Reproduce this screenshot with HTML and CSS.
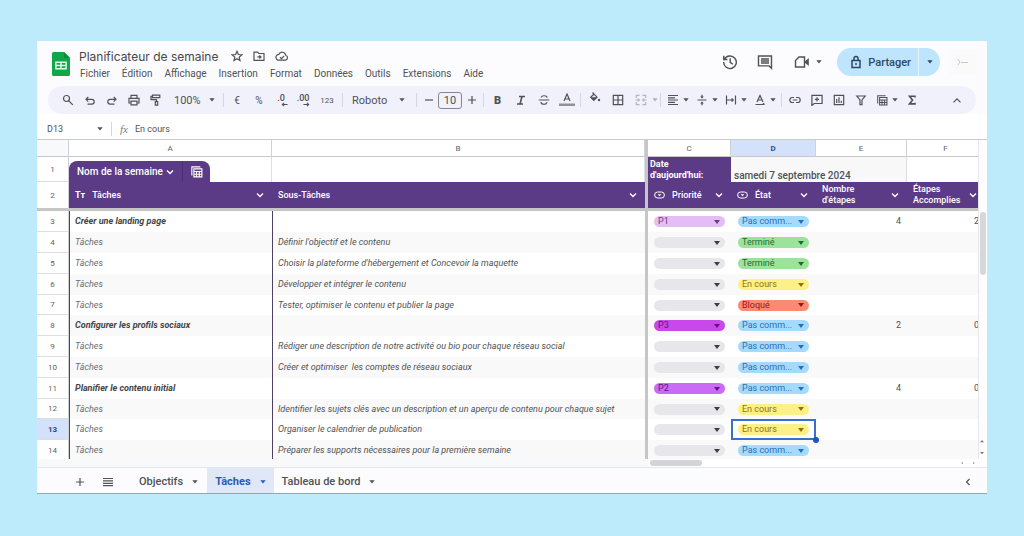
FILE: index.html
```html
<!DOCTYPE html>
<html lang="fr">
<head>
<meta charset="utf-8">
<meta name="viewport" content="width=device-width, initial-scale=1">
<title>Planificateur de semaine</title>
<link rel="stylesheet" href="styles.css">
</head>
<body>
<svg class="defs" aria-hidden="true">
  <symbol id="chev" viewBox="0 0 8 8"><path d="M1 2.5l3 3 3-3"/></symbol>
  <symbol id="caret" viewBox="0 0 6 4"><path class="solid" d="M0.300 0.300h5.400L3 3.500z"/></symbol>
  <symbol id="sheet" viewBox="0 0 14 14"><path d="M2 11.2V2h9.2M4.2 4.2h8.6v8.6H4.2zM4.200 7h8.600M4.200 10h8.600M7 7v6M10 7v6"/></symbol>
  <symbol id="pill" viewBox="0 0 11 8"><rect x="0.6" y="1" width="9.8" height="6" rx="3"/><path class="solid" d="M3.6 3.2h3.8L5.5 5.2z"/></symbol>
</svg>
<main class="app">
  <header class="head">
    <svg class="logo" viewBox="0 0 18 24" aria-label="Sheets"><path fill="#10a64a" d="M1.500 0H12l6 6v16.500a1.500 1.500 0 0 1-1.500 1.500h-15A1.500 1.500 0 0 1 0 22.500v-21A1.500 1.500 0 0 1 1.500 0z"/><path fill="#0b8a3b" d="M12 0l6 6h-6z"/><path fill="none" stroke="#e9fbef" stroke-width="1.400" d="M3.900 10.200h10.200v6.600H3.900zM3.900 13.500h10.200M9 10.200v6.600"/></svg>
    <div class="doc">
      <div class="title-row">
        <h1>Planificateur de semaine</h1>
        <button class="mini" aria-label="Favori"><svg viewBox="0 0 12 12"><path d="M6 1.300l1.400 3.200 3.500.3-2.700 2.300.8 3.400-3-1.800-3 1.800.8-3.400L1.100 4.800l3.500-.3z"/></svg></button>
        <button class="mini" aria-label="Déplacer"><svg viewBox="0 0 12 12"><path d="M1 2.200h3.600l1.200 1.300H11v6.800H1zM4.300 6.900h3.600M6.400 5.300L8 6.900 6.400 8.500"/></svg></button>
        <button class="mini cloud" aria-label="Enregistré"><svg viewBox="0 0 14 12"><path d="M4 10.200a2.900 2.900 0 0 1-.3-5.800 3.700 3.700 0 0 1 7 .8 2.600 2.600 0 0 1-.2 5zM5 7.200l1.400 1.400L9.100 6"/></svg></button>
      </div>
      <nav class="menus">
        <a href="#">Fichier</a><a href="#">Édition</a><a href="#">Affichage</a><a href="#">Insertion</a><a href="#">Format</a><a href="#">Données</a><a href="#">Outils</a><a href="#">Extensions</a><a href="#">Aide</a>
      </nav>
    </div>
    <div class="actions">
      <button class="act" aria-label="Historique"><svg viewBox="0 0 16 16"><path d="M2.500 5.200A6.300 6.300 0 1 1 1.700 8M1.700 1.800v3.700h3.700M8.200 4.300v4l2.700 1.900"/></svg></button>
      <button class="act" aria-label="Commentaires"><svg viewBox="0 0 16 16"><path d="M1.500 2h13v12.300l-2.400-2.400H1.500zM4 5h8M4 7h8M4 9h8"/></svg></button>
      <button class="act video" aria-label="Visioconférence"><svg viewBox="0 0 16 16"><path d="M5 3h5.500v10H1.500V6.500z"/><path class="solid" d="M11 7.200L14.800 4v8L11 8.800z"/></svg><svg class="caret"><use href="#caret"/></svg></button>
      <div class="share">
        <button class="share-main"><svg viewBox="0 0 12 14"><path d="M2 5.400h8v7H2zM4 5.400V3.500a2 2 0 0 1 4 0v1.900"/><circle class="solid" cx="6" cy="8.900" r="1"/></svg>Partager</button>
        <button class="share-more" aria-label="Options de partage"><svg class="caret"><use href="#caret"/></svg></button>
      </div>
      <div class="avatar"><svg viewBox="0 0 12 8"><path d="M1 1l2 3-2 3M4 4.500h7"/></svg></div>
    </div>
  </header>

  <div class="toolbar" role="toolbar">
    <button class="ib" aria-label="Rechercher"><svg viewBox="0 0 12 12"><circle cx="4.500" cy="4.500" r="3"/><path d="M6.800 6.800l4 4"/></svg></button>
    <button class="ib" aria-label="Annuler"><svg viewBox="0 0 12 12"><path d="M4.300 3L2 5.300l2.300 2.300M2 5.300h5.800a2.400 2.400 0 0 1 0 4.800H3.500"/></svg></button>
    <button class="ib" aria-label="Rétablir"><svg viewBox="0 0 12 12"><path d="M7.700 3L10 5.300 7.700 7.600M10 5.300H4.200a2.400 2.400 0 0 0 0 4.800h4.300"/></svg></button>
    <button class="ib" aria-label="Imprimer"><svg viewBox="0 0 12 12"><path d="M3 4V1.300h6V4M3 9H1V4.300h10V9H9M3 7.200h6v3.600H3z"/></svg></button>
    <button class="ib" aria-label="Copier le format"><svg viewBox="0 0 12 12"><path d="M2.500 1.200h7.300v2.400H2.500zM2.500 2.300H1v3.300h5.500v2M5.300 7.700h2.400v3.500H5.300z"/></svg></button>
    <button class="zoom">100%<svg class="caret"><use href="#caret"/></svg></button>
    <i class="sep"></i>
    <button class="ib">€</button><button class="ib">%</button>
    <button class="ib dec" aria-label="Moins de décimales"><b>.0</b><svg class="mark" viewBox="0 0 8 5"><path d="M7.500 2.500H1.500M3.500.7L1.500 2.500l2 1.800"/></svg></button>
    <button class="ib dec" aria-label="Plus de décimales"><b>.00</b><svg class="mark" viewBox="0 0 8 5"><path d="M.5 2.500h6M4.500.7l2 1.800-2 1.800"/></svg></button>
    <button class="ib num">123</button>
    <i class="sep"></i>
    <button class="font">Roboto<svg class="caret"><use href="#caret"/></svg></button>
    <i class="sep"></i>
    <button class="step" aria-label="Réduire"><svg viewBox="0 0 12 12"><path d="M2 6h8"/></svg></button>
    <input class="size" value="10" aria-label="Taille de police">
    <button class="step" aria-label="Agrandir"><svg viewBox="0 0 12 12"><path d="M2 6h8M6 2v8"/></svg></button>
    <i class="sep"></i>
    <button class="ib w bold">B</button>
    <button class="ib w" aria-label="Italique"><svg class="heavy" viewBox="0 0 12 12"><path d="M4 2.500h6M2 10h6M7 2.500l-2 7.500"/></svg></button>
    <button class="ib w" aria-label="Barré"><svg viewBox="0 0 12 12"><path d="M.8 6h10.400M9 3.700C8.600 1 3.300 1.300 3.300 3.600M3 8.100c.3 3 6 2.700 5.800 0"/></svg></button>
    <button class="ib w" aria-label="Couleur du texte"><svg class="color-a" viewBox="0 0 16 14"><path d="M5 8l3-7 3 7M6 6h4"/><path class="solid gray" d="M0 10.500h16v2.500H0z"/></svg></button>
    <i class="sep"></i>
    <button class="ib w" aria-label="Remplissage"><svg class="up" viewBox="0 0 12 12"><path d="M3.500.5L5 2M5 2L1.700 5.200 4.800 8.300 8 5.200z"/><path class="solid" d="M1.700 5.200H8L4.800 8.300z"/><circle class="solid" cx="10" cy="8" r="1.200"/></svg></button>
    <button class="ib w" aria-label="Bordures"><svg viewBox="0 0 12 12"><path d="M1.300 1.300h9.400v9.400H1.300zM6 1.300v9.400M1.300 6h9.400"/></svg></button>
    <button class="ib w faded" aria-label="Fusionner"><svg viewBox="0 0 12 12"><path d="M4.500 1.300H1.300V4M7.500 1.300h3.200V4M4.500 10.700H1.300V8M7.500 10.700h3.200V8M.5 6h3.700M11.500 6H7.800M3 4.700L4.300 6 3 7.300M9 4.700L7.700 6 9 7.300"/></svg></button>
    <svg class="caret faded"><use href="#caret"/></svg>
    <i class="sep"></i>
    <button class="dd" aria-label="Aligner"><svg viewBox="0 0 12 12"><path d="M1 1.500h10M1 3.800h7M1 6h10M1 8.300h7M1 10.500h10"/></svg><svg class="caret"><use href="#caret"/></svg></button>
    <button class="dd" aria-label="Alignement vertical"><svg viewBox="0 0 12 12"><path d="M1.500 6h9M6 .8v3M6 11.200v-3"/><path class="solid" d="M4.200 2.600h3.600L6 4.600zM4.200 9.400h3.600L6 7.400z"/></svg><svg class="caret"><use href="#caret"/></svg></button>
    <button class="dd" aria-label="Retour à la ligne"><svg viewBox="0 0 12 12"><path d="M1.500 1.500v9M10.500 1.500v9M1.500 6h6.500M6.600 4.500L8.200 6 6.600 7.500"/></svg><svg class="caret"><use href="#caret"/></svg></button>
    <button class="dd" aria-label="Rotation"><svg viewBox="0 0 12 12"><path d="M3 8l3-6.500L9 8M4 6h4M1.500 10.500h9M9 9.200l1.500 1.300"/></svg><svg class="caret"><use href="#caret"/></svg></button>
    <i class="sep"></i>
    <button class="ib" aria-label="Lien"><svg viewBox="0 0 12 12"><path d="M5 3.500H3.300a2.500 2.500 0 0 0 0 5H5M7 3.500h1.700a2.500 2.500 0 0 1 0 5H7M3.800 6h4.400"/></svg></button>
    <button class="ib" aria-label="Commentaire"><svg viewBox="0 0 12 12"><path d="M.9 1.300h10.200v8.200H3.200L.9 11.400zM6 3.300v4.200M3.900 5.400h4.200"/></svg></button>
    <button class="ib" aria-label="Graphique"><svg viewBox="0 0 12 12"><path d="M1.300 1.300h9.400v9.400H1.300zM3.700 5v4M6 3.300V9M8.300 6.800V9"/></svg></button>
    <button class="ib" aria-label="Filtre"><svg viewBox="0 0 12 12"><path d="M1.800 2h8.400L7 6v4.700H5V6z"/></svg></button>
    <button class="dd" aria-label="Tableaux"><svg viewBox="0 0 14 14"><use href="#sheet"/></svg><svg class="caret"><use href="#caret"/></svg></button>
    <button class="ib" aria-label="Fonctions"><svg class="heavy" viewBox="0 0 12 12"><path d="M9 3.500V2.300H3.500L6.500 6l-3 3.900H9V8.700"/></svg></button>
    <button class="ib last" aria-label="Masquer les menus"><svg viewBox="0 0 12 12"><path d="M2.500 8.300L6 4.800l3.500 3.500"/></svg></button>
  </div>

  <div class="formula">
    <input class="namebox" value="D13" aria-label="Zone de nom">
    <svg class="caret"><use href="#caret"/></svg>
    <i class="sep"></i>
    <label for="fx">fx</label>
    <input id="fx" class="fx" value="En cours">
  </div>

  <div class="sheet">
    <div class="view">
      <table>
        <colgroup><col class="c-n"><col class="c-a"><col><col class="c-c"><col class="c-d"><col class="c-e"><col class="c-f"></colgroup>
        <thead>
          <tr class="letters"><th></th><th>A</th><th>B</th><th class="fz">C</th><th class="on">D</th><th>E</th><th>F</th></tr>
          <tr class="r1"><th>1</th>
            <td class="tabcell"><div class="tname"><button>Nom de la semaine<svg class="chev"><use href="#chev"/></svg></button><button class="tico" aria-label="Options du tableau"><svg><use href="#sheet"/></svg></button></div></td>
            <td></td><td class="fz today">Date<br>d'aujourd'hui:</td><td class="date" colspan="2">samedi 7 septembre 2024</td><td></td></tr>
          <tr class="r2"><th>2</th>
            <td><div class="h"><b class="tt">Tт</b><span>Tâches</span><svg class="chev"><use href="#chev"/></svg></div></td>
            <td><div class="h"><span>Sous-Tâches</span><svg class="chev"><use href="#chev"/></svg></div></td>
            <td class="fz"><div class="h"><svg class="pill"><use href="#pill"/></svg><span>Priorité</span><svg class="chev"><use href="#chev"/></svg></div></td>
            <td><div class="h"><svg class="pill"><use href="#pill"/></svg><span>État</span><svg class="chev"><use href="#chev"/></svg></div></td>
            <td><div class="h"><span>Nombre d'étapes</span><svg class="chev"><use href="#chev"/></svg></div></td>
            <td><div class="h"><span>Étapes Accomplies</span><svg class="chev"><use href="#chev"/></svg></div></td></tr>
        </thead>
        <tbody>
          <tr class="main"><th>3</th><td>Créer une landing page</td><td></td><td class="fz"><span class="chip p1"><select aria-label="Priorité 3"><option>P1</option></select></span></td><td><span class="chip todo"><select aria-label="État 3"><option>Pas comm...</option></select></span></td><td class="n">4</td><td class="n">2</td></tr>
          <tr><th>4</th><td>Tâches</td><td>Définir l'objectif et le contenu</td><td class="fz"><span class="chip"><select aria-label="Priorité 4"><option></option></select></span></td><td><span class="chip done"><select aria-label="État 4"><option>Terminé</option></select></span></td><td></td><td></td></tr>
          <tr><th>5</th><td>Tâches</td><td>Choisir la plateforme d'hébergement et Concevoir la maquette</td><td class="fz"><span class="chip"><select aria-label="Priorité 5"><option></option></select></span></td><td><span class="chip done"><select aria-label="État 5"><option>Terminé</option></select></span></td><td></td><td></td></tr>
          <tr><th>6</th><td>Tâches</td><td>Développer et intégrer le contenu</td><td class="fz"><span class="chip"><select aria-label="Priorité 6"><option></option></select></span></td><td><span class="chip doing"><select aria-label="État 6"><option>En cours</option></select></span></td><td></td><td></td></tr>
          <tr><th>7</th><td>Tâches</td><td>Tester, optimiser le contenu et publier la page</td><td class="fz"><span class="chip"><select aria-label="Priorité 7"><option></option></select></span></td><td><span class="chip stop"><select aria-label="État 7"><option>Bloqué</option></select></span></td><td></td><td></td></tr>
          <tr class="main"><th>8</th><td>Configurer les profils sociaux</td><td></td><td class="fz"><span class="chip p3"><select aria-label="Priorité 8"><option>P3</option></select></span></td><td><span class="chip todo"><select aria-label="État 8"><option>Pas comm...</option></select></span></td><td class="n">2</td><td class="n">0</td></tr>
          <tr><th>9</th><td>Tâches</td><td>Rédiger une description de notre activité ou bio pour chaque réseau social</td><td class="fz"><span class="chip"><select aria-label="Priorité 9"><option></option></select></span></td><td><span class="chip todo"><select aria-label="État 9"><option>Pas comm...</option></select></span></td><td></td><td></td></tr>
          <tr><th>10</th><td>Tâches</td><td>Créer et optimiser &nbsp;les comptes de réseau sociaux</td><td class="fz"><span class="chip"><select aria-label="Priorité 10"><option></option></select></span></td><td><span class="chip todo"><select aria-label="État 10"><option>Pas comm...</option></select></span></td><td></td><td></td></tr>
          <tr class="main"><th>11</th><td>Planifier le contenu initial</td><td></td><td class="fz"><span class="chip p2"><select aria-label="Priorité 11"><option>P2</option></select></span></td><td><span class="chip todo"><select aria-label="État 11"><option>Pas comm...</option></select></span></td><td class="n">4</td><td class="n">0</td></tr>
          <tr><th>12</th><td>Tâches</td><td>Identifier les sujets clés avec un description et un aperçu de contenu pour chaque sujet</td><td class="fz"><span class="chip"><select aria-label="Priorité 12"><option></option></select></span></td><td><span class="chip doing"><select aria-label="État 12"><option>En cours</option></select></span></td><td></td><td></td></tr>
          <tr><th class="on">13</th><td>Tâches</td><td>Organiser le calendrier de publication</td><td class="fz"><span class="chip"><select aria-label="Priorité 13"><option></option></select></span></td><td class="sel"><span class="chip doing"><select aria-label="État 13"><option>En cours</option></select></span></td><td></td><td></td></tr>
          <tr><th>14</th><td>Tâches</td><td>Préparer les supports nécessaires pour la première semaine</td><td class="fz"><span class="chip"><select aria-label="Priorité 14"><option></option></select></span></td><td><span class="chip todo"><select aria-label="État 14"><option>Pas comm...</option></select></span></td><td></td><td></td></tr>
        </tbody>
      </table>
    </div>
    <div class="vbar"><div class="vthumb"></div><div class="arrows"><svg viewBox="0 0 6 4"><path class="solid" d="M1 3.200h4L3 1z"/></svg><svg viewBox="0 0 6 4"><path class="solid" d="M1 1h4L3 3.200z"/></svg></div></div>
  </div>
  <div class="hbar"><div class="htrack"><div class="hthumb"></div><svg viewBox="0 0 4 6"><path class="solid" d="M3 1v4L1 3z"/></svg><svg viewBox="0 0 4 6"><path class="solid" d="M1 1v4l2-2z"/></svg></div></div>

  <footer class="tabs">
    <button class="tb" aria-label="Ajouter une feuille"><svg viewBox="0 0 12 12"><path d="M2 6h8M6 2v8"/></svg></button>
    <button class="tb" aria-label="Toutes les feuilles"><svg viewBox="0 0 12 12"><path d="M1 2.500h10M1 4.900h10M1 7.300h10M1 9.700h10"/></svg></button>
    <button class="tab first">Objectifs<svg class="caret"><use href="#caret"/></svg></button>
    <button class="tab active">Tâches<svg class="caret"><use href="#caret"/></svg></button>
    <button class="tab">Tableau de bord<svg class="caret"><use href="#caret"/></svg></button>
    <button class="tb end" aria-label="Afficher le panneau"><svg viewBox="0 0 12 12"><path d="M7.500 3L4.500 6l3 3"/></svg></button>
  </footer>
</main>
</body>
</html>
```
FILE: styles.css
```css
* { box-sizing: border-box; }
body {
  margin: 0;
  padding: 41px 37px 42px;
  background: #bdebfc;
  color: #505256;
  font-family: Roboto, "Liberation Sans", sans-serif;
  font-size: 10px;
}
button, input, select {
  font: inherit;
  color: inherit;
  border: 0;
  padding: 0;
  margin: 0;
  background: none;
}
svg { fill: none; stroke: currentColor; stroke-width: 1.200; flex: none; }
.solid { fill: currentColor; stroke: none; }
.defs { display: none; }
.caret { width: 6px; height: 4px; }
.faded { color: #b3b4bb; }
.app {
  display: flex;
  flex-direction: column;
  background: #fcfcfe;
  border-bottom: 1px solid #8fa9b3;
}

/* document header */
.head { display: flex; align-items: flex-start; height: 45px; padding: 7px 11px 0 15px; }
.logo { width: 18px; height: 24px; margin-top: 4px; stroke: none; }
.doc { margin-left: 9px; flex: 1; }
.title-row { display: flex; align-items: center; height: 16px; }
h1 { margin: 0 13px 0 0; font-size: 12px; font-weight: 400; font-family: Inter, Roboto, sans-serif; color: #46484b; white-space: nowrap; }
.mini { width: 12px; height: 12px; margin-right: 10px; }
.mini svg { display: block; width: 12px; height: 12px; }
.cloud svg { width: 14px; }
.menus { display: flex; gap: 12px; height: 18px; align-items: center; padding-left: 1px; }
.menus a { color: inherit; text-decoration: none; }
.actions { display: flex; align-items: center; height: 28px; }
.act { width: 16px; height: 16px; margin-right: 19px; display: flex; align-items: center; gap: 6px; }
.act svg:first-child { width: 16px; height: 16px; stroke-width: 1.400; }
.video { width: 28px; margin-right: 15px; margin-left: 2px; }
.share { display: flex; height: 28px; border-radius: 14px; background: #bfe4fd; color: #2c4a61; overflow: hidden; }
.share-main { display: flex; align-items: center; gap: 6px; padding: 0 7px 0 13px; font-size: 11px; font-weight: 500; }
.share-main svg { width: 12px; height: 14px; stroke-width: 1.500; }
.share-more { display: grid; place-items: center; width: 22px; border-left: 1px solid #e5f5fe; }
.avatar { width: 26px; height: 26px; margin-left: 10px; display: grid; place-items: center; background: #fbfafb; color: #c9c9cb; }
.avatar svg { width: 12px; height: 8px; stroke-width: 1; }

/* toolbar */
.toolbar { display: flex; align-items: center; height: 28px; margin: 0 11px; padding-left: 9px; border-radius: 14px; background: #f0f1fb; }
.toolbar svg:not(.caret, .color-a, .mark) { width: 12px; height: 12px; }
.ib { width: 22px; height: 22px; display: grid; place-items: center; }
.w { width: 23px; }
.sep { width: 1px; height: 14px; margin: 0 2px; background: #d5d7e0; }
.zoom, .font { display: flex; align-items: center; justify-content: space-between; height: 22px; }
.zoom { width: 54px; padding: 0 6px 0 7px; font-size: 11px; }
.font { width: 69px; padding: 0 9px 0 7px; font-size: 11px; }
.ib.num { width: 26px; font-size: 8px; }
.toolbar .dec { display: flex; flex-direction: column; align-items: center; justify-content: center; font-size: 9px; line-height: 8px; }
.dec b { font-weight: 500; }
.mark { width: 7px; height: 5px; align-self: flex-end; margin-right: 4px; }
.step { width: 19px; height: 22px; display: grid; place-items: center; }
.size { width: 24px; height: 17px; border: 1px solid #85878c; border-radius: 3px; text-align: center; font-size: 11px; }
.bold { font-weight: 900; font-size: 11px; }
.toolbar .heavy { stroke-width: 1.600; }
.color-a { width: 16px; height: 14px; }
.gray { opacity: 0.600; }
.up { margin-bottom: 4px; }
.dd { display: flex; align-items: center; gap: 4px; width: 29px; height: 22px; padding-left: 4px; }
.last { margin-left: auto; margin-right: 8px; }

/* formula bar */
.formula { display: flex; align-items: center; height: 25px; padding: 4px 0 0 10px; background: #fff; }
.formula input { font-size: 9px; height: 16px; }
.namebox { width: 50px; }
.formula .sep { margin: 0 8px; }
.formula label { font: italic 11px "Liberation Serif", serif; color: #77807c; width: 15px; }
.fx { flex: 1; }

/* grid */
.sheet { display: flex; background: #fff; height: 320px; border-top: 1px solid #c9cbce; }
.view { flex: 1; min-width: 0; overflow: hidden; }
table { width: calc(100% + 7px); table-layout: fixed; border-collapse: separate; border-spacing: 0; font-size: 9px; line-height: 11px; }
.c-n { width: 32px; }
.c-a { width: 203px; }
.c-c { width: 86px; }
.c-d { width: 85px; }
.c-e { width: 91px; }
.c-f { width: 78px; }
th { padding: 0; font-weight: 400; font-size: 8px; border-right: 1px solid #cfd1d4; border-bottom: 1px solid #dcdee0; background: #fff; color: #5c5f63; }
td { padding: 0 6px; white-space: nowrap; overflow: hidden; }
.fz { border-left: 3px solid #c6c6c6; }
.letters th { height: 17px; border-bottom-color: #c6c8cb; }
.letters th:first-child { background: #f8f9fa; }
.on, .letters .on { background: #d3e1fb; color: #2b4d86; font-weight: 700; }
.r1 > * { height: 25px; }
.r1 td { border-right: 1px solid #dcdee0; }
.r1 .tabcell { padding: 4px 0 0; vertical-align: bottom; }
.tname { display: flex; width: 141px; height: 21px; border-radius: 8px 8px 0 0; background: #5b3a86; color: #fff; }
.tname button { display: flex; align-items: center; justify-content: space-between; flex: 1; padding: 0 8px; font-weight: 500; font-size: 10px; border-right: 1px solid #4b2e73; }
.tname .tico { flex: 0 0 27px; padding: 0 0 0 7px; border: 0; }
.tico svg { width: 13px; height: 13px; }
.chev { width: 8px; height: 8px; stroke-width: 1.300; }
.r1 .today { background: #5b3a86; color: #fff; font-weight: 700; padding: 0 2px; border-right: 0; }
.r1 .date { background: #f8f8f9; font-weight: 500; font-size: 10px; padding: 0 3px 1px; vertical-align: bottom; }
.r2 > * { height: 29px; border-bottom: 3px solid #c6c6c6; }
.r2 td { background: #5b3a86; color: #fff; font-weight: 500; white-space: normal; padding-right: 8px; }
.h { display: flex; align-items: center; gap: 7px; }
.h .chev { margin-left: auto; }
.h span { min-width: 0; }
.tt { font-weight: 700; }
.pill { width: 11px; height: 8px; stroke-width: 1; }
tbody tr > * { height: 21px; }
tbody tr:nth-child(5n) > * { height: 20px; }
tbody tr:nth-child(even) td { background: #f9f9fa; }
tbody td:nth-child(2) { border-left: 1px solid #4d4166; padding-left: 5px; font-style: italic; color: #6b6d70; }
tbody td:nth-child(3) { border-left: 1px solid #4d4166; padding-left: 5px; font-style: italic; }
tbody td:nth-child(5) { padding-left: 7px; }
tbody .main td:nth-child(2) { font-weight: 700; color: #434548; }
td.n { text-align: right; }
.chip { display: grid; width: 71px; height: 11px; border-radius: 6px; align-items: center; background: #e7e7eb; color: #3c3e41; }
.chip::after { content: ""; grid-area: 1 / 1; justify-self: end; margin-right: 5px; border: 3px solid transparent; border-top: 4px solid currentColor; border-bottom: 0; pointer-events: none; }
.chip select { grid-area: 1 / 1; appearance: none; width: 100%; height: 11px; padding: 0 12px 0 4px; line-height: 11px; }
.p1 { background: #e3bdf3; color: #6b3a80; }
.p2 { background: #ca6af5; color: #5b1681; }
.p3 { background: #c848ea; color: #6a0e87; }
.todo { background: #a4dafd; color: #2b6fb3; }
.done { background: #9be39b; color: #236b35; }
.doing { background: #fdf087; color: #94700f; }
.stop { background: #fb8a75; color: #9c1410; }
tbody .sel { position: relative; overflow: visible; box-shadow: inset 0 0 0 2px #3a6fd0; }
.sel::after { content: ""; position: absolute; right: -3px; bottom: -3px; width: 6px; height: 6px; border-radius: 50%; background: #1d55bd; }

/* scroll bars */
.vbar { width: 9px; display: flex; flex-direction: column; padding-top: 72px; border-left: 1px solid #e6e7e9; background: #fdfdfd; }
.vthumb { width: 6px; height: 63px; margin-left: 1px; border-radius: 3px; background: #d6d7da; }
.arrows { margin-top: auto; display: grid; gap: 8px; padding-bottom: 4px; }
.arrows svg, .htrack svg { width: 6px; height: 4px; color: #77797d; }
.hbar { height: 9px; padding-left: 611px; background: #f8f9fb; border-bottom: 1px solid #e6e7e9; }
.htrack { display: flex; align-items: center; gap: 6px; height: 8px; padding-right: 10px; background: #fff; }
.hthumb { width: 52px; height: 6px; margin: 0 auto 0 2px; border-radius: 3px; background: #d3d4d7; }

/* sheet tabs */
.tabs { display: flex; align-items: center; height: 25px; padding-left: 29px; font-size: 11px; font-weight: 500; }
.tabs button { padding-top: 2px; }
.tb { width: 28px; height: 25px; display: grid; place-items: center; }
.tb svg { width: 12px; height: 12px; }
.tab { display: flex; align-items: center; gap: 9px; height: 25px; padding: 0 8px; }
.first { margin-left: 9px; padding-right: 9px; }
.active { background: #e0e8f7; color: #2a5bbd; font-weight: 700; }
.end { margin-left: auto; margin-right: 5px; }
```
